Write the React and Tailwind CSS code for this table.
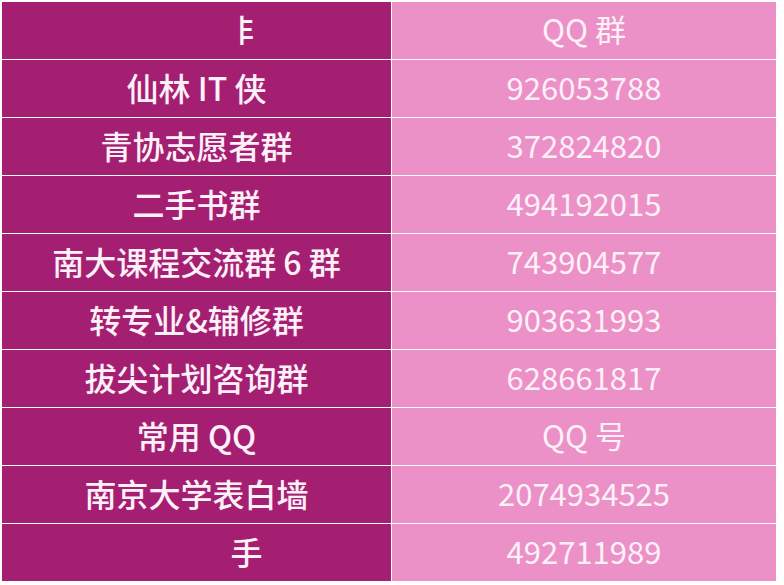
const rows = [
  { name: "非", qq: "QQ 群", clip: true },
  { name: "仙林 IT 侠", qq: "926053788" },
  { name: "青协志愿者群", qq: "372824820" },
  { name: "二手书群", qq: "494192015" },
  { name: "南大课程交流群 6 群", qq: "743904577" },
  { name: "转专业&辅修群", qq: "903631993" },
  { name: "拔尖计划咨询群", qq: "628661817" },
  { name: "常用 QQ", qq: "QQ 号" },
  { name: "南京大学表白墙", qq: "2074934525" },
  { name: "手", qq: "492711989", shift: "pl-[100px]" },
];

const App = () => {
  return (
    <div
      className="w-[784px] h-[585px] bg-white pt-[2px] pl-[2px] overflow-hidden"
      style={{ fontFamily: '"Noto Sans CJK SC", "Noto Sans", sans-serif' }}
    >
      <div className="flex flex-col gap-[1px] w-[774px]">
        {rows.map((row, i) => (
          <div key={i} className="grid grid-cols-[389px_384px] gap-[1px] h-[57px]">
            <div
              className={`flex items-center justify-center pb-[4px] bg-[#a41f72] text-[#fdf0f7] text-[32px] font-medium leading-none ${row.shift || ""} ${row.clip ? "pl-[100px]" : ""}`}
            >
              {row.clip ? (
                <span className="inline-flex justify-end w-[15px] overflow-hidden">
                  <span>{row.name}</span>
                </span>
              ) : (
                row.name
              )}
            </div>
            <div className="flex items-center justify-center pb-[4px] bg-[#ec91c8] text-[#fdf0f7] text-[31px] leading-none">
              {row.qq}
            </div>
          </div>
        ))}
      </div>
    </div>
  );
};

export default App;
